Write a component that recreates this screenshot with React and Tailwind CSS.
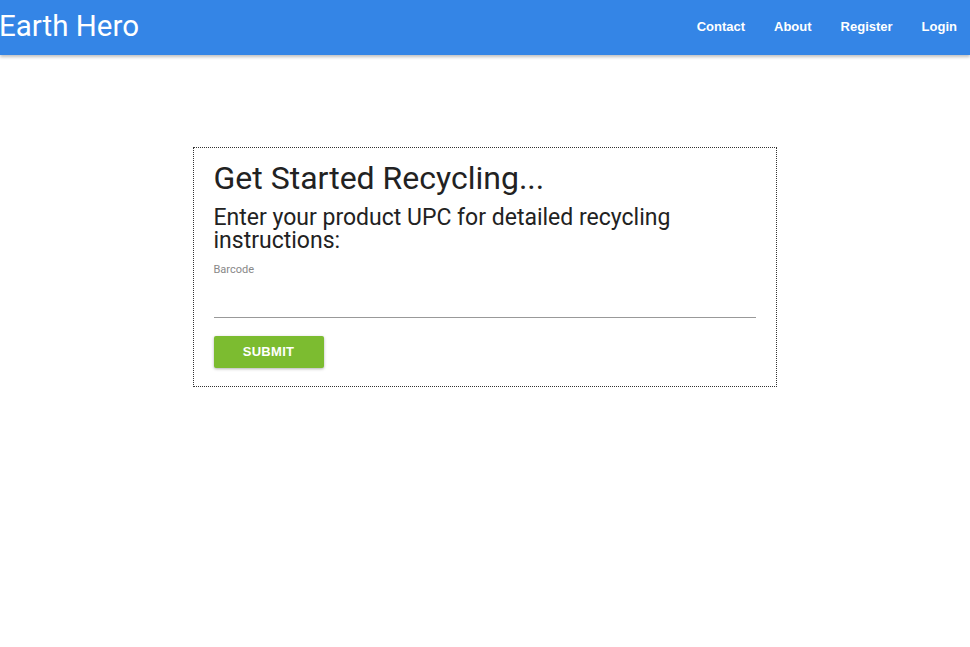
import React from 'react';

const App = () => {
  return (
    <div className="min-h-[647px] bg-white font-['Roboto',sans-serif]">
      {/* Top bar */}
      <header className="h-[55px] pb-[2px] bg-[#3485e6] shadow-[0_2px_3px_rgba(0,0,0,0.25)] flex items-center justify-between">
        <div className="text-white text-[29.5px] leading-none -ml-[1px]">Earth Hero</div>
        <nav className="flex items-center gap-[29px] pr-[13px] text-white text-[13px] font-bold font-['Liberation_Sans',Arial,sans-serif]">
          <a href="#">Contact</a>
          <a href="#">About</a>
          <a href="#">Register</a>
          <a href="#">Login</a>
        </nav>
      </header>

      <main className="flex justify-center pt-[92px]">
        <div className="w-[584px] ml-[-1px] border border-dotted border-[#333] px-[20px] pt-[12px] pb-[18px]">
          <h1 className="text-[32px] leading-[36px] text-[#222]">Get Started Recycling...</h1>
          <h2 className="mt-[10px] text-[23px] leading-[23px] text-[#222]">
            Enter your product UPC for detailed recycling instructions:
          </h2>
          <label className="block mt-[10px] text-[11px] leading-[16px] text-[#888]">Barcode</label>
          <input
            type="text"
            className="block w-full mt-[16px] h-[24px] border-b border-[#999] outline-none text-[14px]"
          />
          <button className="mt-[18px] w-[110px] h-[32px] rounded-[2px] bg-[#7cbc30] text-white text-[13px] font-bold tracking-[0.3px] font-['Liberation_Sans',Arial,sans-serif] shadow-[0_1px_3px_rgba(0,0,0,0.3)]">
            SUBMIT
          </button>
        </div>
      </main>
    </div>
  );
};

export default App;
